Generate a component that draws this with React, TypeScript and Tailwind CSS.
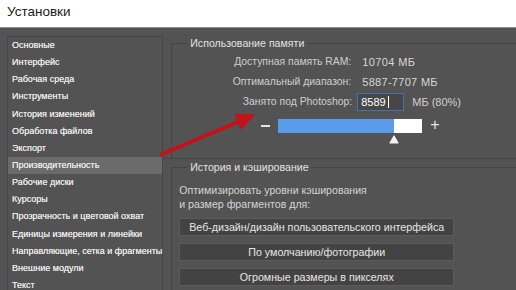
import React from "react";

const items = [
  "Основные",
  "Интерфейс",
  "Рабочая среда",
  "Инструменты",
  "История изменений",
  "Обработка файлов",
  "Экспорт",
  "Производительность",
  "Рабочие диски",
  "Курсоры",
  "Прозрачность и цветовой охват",
  "Единицы измерения и линейки",
  "Направляющие, сетка и фрагменты",
  "Внешние модули",
  "Текст",
];

export default function App() {
  return (
    <div className="relative w-[516px] h-[290px] overflow-hidden bg-[#535353] font-['Liberation_Sans',Arial,sans-serif]">
      <div className="h-[28px] bg-white border-b border-[#8c8c8c] flex items-center pl-[7px] text-[13.5px] text-[#1b1b1b] pb-[2px]">
        Установки
      </div>
      <div className="flex">
        <div className="ml-[7px] mt-[8px] w-[157px] h-[260px] border-t border-l border-r border-[#464646]">
          {items.map((t) => (
            <div
              key={t}
              className={`h-[17.15px] leading-[17.15px] pl-[4px] text-[9px] text-[#ececec] whitespace-nowrap [text-shadow:0_0_0.5px_#e0e0e0] ${
                t === "Производительность" ? "bg-[#6b6b6b]" : ""
              }`}
            >
              {t}
            </div>
          ))}
        </div>
        <div className="flex-1 flex flex-col">
          <fieldset className="ml-[8px] mt-[8px] w-[400px] h-[122px] border-t border-l border-[#444] text-[10.4px]">
            <legend className="ml-[15px] px-[3px] leading-[14px] text-[#e2e2e2] text-[10.6px]">
              Использование памяти
            </legend>
            <div className="pt-[2px]">
              <div className="flex h-[20px] items-center">
                <div className="w-[179px] text-right text-[#cfcfcf]">Доступная память RAM:</div>
                <div className="ml-[11px] text-[#d6d6d6] text-[11px] tracking-[0.4px]">10704 МБ</div>
              </div>
              <div className="flex h-[20px] items-center">
                <div className="w-[179px] text-right text-[#cfcfcf]">Оптимальный диапазон:</div>
                <div className="ml-[11px] text-[#d6d6d6] text-[11px] tracking-[0.3px]">5887-7707 МБ</div>
              </div>
              <div className="flex h-[20px] items-center">
                <div className="w-[180px] text-right text-[#cfcfcf]">Занято под Photoshop:</div>
                <div className="ml-[5px] w-[47px] h-[18px] border border-[#4173ad] bg-[#474747] flex items-center pl-[3px] text-white text-[11px]">
                  8589<span className="ml-[2px] w-px h-[12px] bg-white" />
                </div>
                <div className="ml-[8px] text-[#d0d0d0] text-[11px]">МБ (80%)</div>
              </div>
              <div className="flex items-start h-[26px]">
                <div className="ml-[89px] w-[9px] h-[2px] bg-[#e6e6e6] mt-[13px]" />
                <div className="relative ml-[8px] mt-[7px] w-[144px] h-[14px] bg-white flex">
                  <div className="w-[116px] h-full bg-[#5b9bec]" />
                  <svg className="absolute left-[111px] top-[16px]" width="10" height="9" viewBox="0 0 10 9">
                    <path d="M5 1 L9 8 L1 8 Z" fill="#f4f4f4" stroke="#f4f4f4" strokeWidth="1.2" strokeLinejoin="round" />
                  </svg>
                </div>
                <div className="ml-[8px] mt-[5px] text-[16px] leading-[16px] text-[#e6e6e6]">+</div>
              </div>
            </div>
          </fieldset>
          <div className="h-px bg-[#444] w-full" />
          <div className="h-[1px]" />
          <fieldset className="ml-[8px] w-[400px] h-[130px] border-t border-l border-[#444] text-[10.6px]">
            <legend className="ml-[15px] px-[3px] leading-[14px] text-[#e2e2e2] text-[10.6px]">
              История и кэширование
            </legend>
            <div className="pl-[7px] pt-[9px] text-[#d4d4d4] leading-[14px]">
              <div>Оптимизировать уровни кэширования</div>
              <div>и размер фрагментов для:</div>
            </div>
            <div className="pl-[7px] pt-[7px] flex flex-col gap-[7px]">
              {[
                "Веб-дизайн/дизайн пользовательского интерфейса",
                "По умолчанию/фотографии",
                "Огромные размеры в пикселях",
              ].map((b) => (
                <div
                  key={b}
                  className="w-[275px] h-[18px] flex items-center justify-center bg-[#434343] border border-[#5c5c5c] text-[#e6e6e6] text-[10.7px]"
                >
                  {b}
                </div>
              ))}
            </div>
          </fieldset>
        </div>
      </div>
      <svg className="absolute left-0 top-0 pointer-events-none" width="516" height="290" viewBox="0 0 516 290">
        <line x1="160" y1="155" x2="240" y2="121" stroke="#c4111b" strokeWidth="4" />
        <path d="M254 115 L241 128.5 L235.5 114.8 Z" fill="#c4111b" stroke="#c4111b" strokeWidth="1.5" strokeLinejoin="round" />
      </svg>
    </div>
  );
}
